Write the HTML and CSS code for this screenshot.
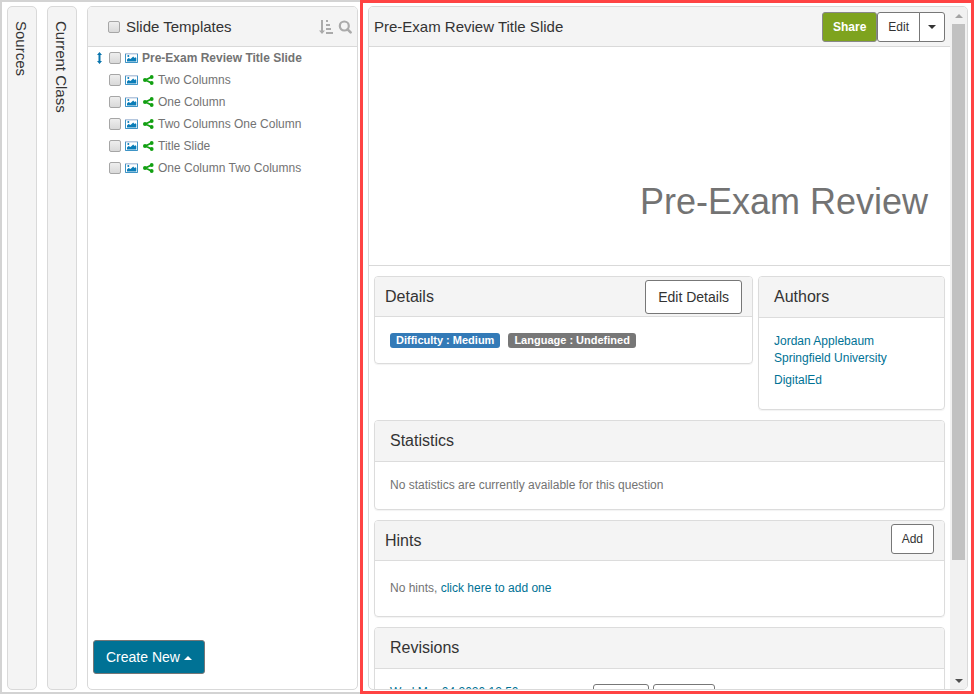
FILE: index.html
```
<!DOCTYPE html>
<html lang="en">
<head>
    <meta charset="UTF-8">
    <title>Slide Templates</title>
    <link rel="stylesheet" href="styles.css">
</head>
<body>

<!-- shared icons -->
<svg class="sprite" aria-hidden="true">
    <symbol id="image" viewBox="0 0 13 10">
        <path fill="#b5c7de" d="M0 0h13v10H0z"/>
        <path fill="#fff" d="M1 1.500h11V9H1z"/>
        <path fill="#0a7db8" d="M2 8.500V6.500l1.500-1.500L5.500 6l2.700-2.500L9.500 5l1-.8.8.8v3.500z"/>
        <circle fill="#0a7db8" cx="3.300" cy="3" r="1"/>
        <path fill="none" stroke="#3d94c6" d="M.5 1v8.500h12V1"/>
    </symbol>
    <symbol id="share" viewBox="0 0 12 10">
        <path fill="none" stroke="#12a012" stroke-width="1.800" d="M9.500 2L3.500 5l6 3"/>
        <circle fill="#12a012" cx="9.700" cy="2" r="1.900"/>
        <circle fill="#12a012" cx="3" cy="5" r="2"/>
        <circle fill="#12a012" cx="9.700" cy="8" r="1.900"/>
    </symbol>
</svg>

<div class="app">
    <aside class="browser">
        <button class="tab" type="button">Sources</button>
        <button class="tab" type="button">Current Class</button>

        <section class="panel list">
            <header class="panel-header">
                <input type="checkbox" id="all" class="check">
                <label for="all" class="title">Slide Templates</label>
                <button class="tool" type="button" aria-label="Sort">
                    <svg width="14" height="14" viewBox="0 0 14 14"><path fill="#aaa" d="M2 0h2v10.500h2L3 14l-3-3.500h2zM7 0h2v2H7zM7 4h4v2H7zM7 8h5v2H7zM7 12h7v2H7z"/></svg>
                </button>
                <button class="tool" type="button" aria-label="Search">
                    <svg width="14" height="14" viewBox="0 0 14 14"><g fill="none" stroke="#aaa"><circle cx="6.300" cy="6" r="4.500" stroke-width="2.200"/><path d="M9.600 9.300l3 3" stroke-width="2.600" stroke-linecap="round"/></g></svg>
                </button>
            </header>
            <ul class="slides">
                <li class="slide active">
                    <svg class="move" width="5" height="12" viewBox="0 0 5 12"><path fill="#0a75ad" d="M2.500 0L5 3H3.500v6H5l-2.500 3L0 9h1.500V3H0z"/></svg>
                    <input type="checkbox" id="s1" class="check">
                    <svg class="image"><use href="#image"/></svg>
                    <label for="s1">Pre-Exam Review Title Slide</label>
                </li>
                <li class="slide">
                    <input type="checkbox" id="s2" class="check">
                    <svg class="image"><use href="#image"/></svg>
                    <svg class="share"><use href="#share"/></svg>
                    <label for="s2">Two Columns</label>
                </li>
                <li class="slide">
                    <input type="checkbox" id="s3" class="check">
                    <svg class="image"><use href="#image"/></svg>
                    <svg class="share"><use href="#share"/></svg>
                    <label for="s3">One Column</label>
                </li>
                <li class="slide">
                    <input type="checkbox" id="s4" class="check">
                    <svg class="image"><use href="#image"/></svg>
                    <svg class="share"><use href="#share"/></svg>
                    <label for="s4">Two Columns One Column</label>
                </li>
                <li class="slide">
                    <input type="checkbox" id="s5" class="check">
                    <svg class="image"><use href="#image"/></svg>
                    <svg class="share"><use href="#share"/></svg>
                    <label for="s5">Title Slide</label>
                </li>
                <li class="slide">
                    <input type="checkbox" id="s6" class="check">
                    <svg class="image"><use href="#image"/></svg>
                    <svg class="share"><use href="#share"/></svg>
                    <label for="s6">One Column Two Columns</label>
                </li>
            </ul>
            <footer class="list-footer">
                <button class="btn btn-large btn-create" type="button">Create New <span class="caret up"></span></button>
            </footer>
        </section>
    </aside>

    <main class="detail">
        <section class="panel viewer">
            <div class="content">
                <header class="panel-header">
                    <h1 class="title">Pre-Exam Review Title Slide</h1>
                    <button class="btn btn-share" type="button">Share</button>
                    <div class="btn-group">
                        <button class="btn" type="button">Edit</button>
                        <button class="btn btn-caret" type="button" aria-label="More"><span class="caret"></span></button>
                    </div>
                </header>

                <div class="preview">Pre-Exam Review</div>

                <div class="cards">
                    <div class="columns">
                        <article class="card">
                            <header class="card-header with-button">
                                <h2>Details</h2>
                                <button class="btn btn-large" type="button">Edit Details</button>
                            </header>
                            <div class="card-body badges">
                                <span class="badge blue">Difficulty : Medium</span>
                                <span class="badge">Language : Undefined</span>
                            </div>
                        </article>
                        <article class="card">
                            <header class="card-header"><h2>Authors</h2></header>
                            <div class="card-body authors">
                                <p><a href="#">Jordan Applebaum</a><br><a href="#">Springfield University</a></p>
                                <p><a href="#">DigitalEd</a></p>
                            </div>
                        </article>
                    </div>

                    <article class="card">
                        <header class="card-header"><h2>Statistics</h2></header>
                        <div class="card-body">No statistics are currently available for this question</div>
                    </article>

                    <article class="card">
                        <header class="card-header with-button">
                            <h2>Hints</h2>
                            <button class="btn" type="button">Add</button>
                        </header>
                        <div class="card-body hints">No hints, <a href="#">click here to add one</a></div>
                    </article>

                    <article class="card">
                        <header class="card-header"><h2>Revisions</h2></header>
                        <div class="card-body revision">
                            <a href="#">Wed Mar 04 2020 12:50</a>
                            <button class="btn" type="button" aria-label="View"></button>
                            <button class="btn" type="button" aria-label="Revert"></button>
                        </div>
                    </article>
                </div>
            </div>

            <div class="scrollbar" aria-hidden="true">
                <div class="scroll-end"><span class="caret up"></span></div>
                <div class="scroll-track"><div class="scroll-thumb"></div></div>
                <div class="scroll-end"><span class="caret"></span></div>
            </div>
        </section>
    </main>
</div>

</body>
</html>
```
FILE: styles.css
```
* {
    box-sizing: border-box;
}

body {
    margin: 0;
    font-family: "Liberation Sans", Arial, sans-serif;
    font-size: 12px;
    line-height: 17px;
    color: #737373;
    background-color: white;
}

h1, h2, p, ul {
    margin: 0;
    padding: 0;
    font-weight: normal;
}

button {
    font-family: inherit;
    cursor: pointer;
}

a {
    color: #007295;
    text-decoration: none;
}

a:hover {
    text-decoration: underline;
}

.sprite {
    position: absolute;
    width: 0;
    height: 0;
}

.app {
    display: flex;
    height: 100vh;
}

/* left side */

.browser {
    display: flex;
    flex: none;
    gap: 10px;
    padding: 4px 2px 2px 5px;
    border: 2px solid #d3d3d3;
    border-right: 0;
}

.tab {
    width: 30px;
    padding: 14px 3px 14px 0;
    border: 1px solid #d9d9d9;
    border-radius: 5px;
    background-color: #f4f4f4;
    color: #333;
    font-size: 15px;
    line-height: 24px;
    text-align: left;
    writing-mode: vertical-rl;
}

.panel {
    border: 1px solid #d9d9d9;
    border-radius: 5px;
    overflow: hidden;
}

.panel-header {
    display: flex;
    align-items: center;
    height: 40px;
    padding: 0 5px;
    border-bottom: 1px solid #d9d9d9;
    background-color: #f4f4f4;
}

.title {
    flex: 1;
    font-size: 15px;
    color: #333;
}

.list {
    display: flex;
    flex-direction: column;
    width: 271px;
}

.list .panel-header {
    gap: 5px;
    padding-left: 20px;
}

.check {
    appearance: none;
    flex: none;
    width: 12px;
    height: 12px;
    margin: 0;
    border: 1px solid #a6a6a6;
    border-radius: 2px;
    background: linear-gradient(#eee, #d9d9d9);
}

.list .panel-header .check {
    margin-right: 1px;
}

.tool {
    width: 14px;
    height: 14px;
    padding: 0;
    border: 0;
    background: none;
}

.tool svg {
    display: block;
}

.slides {
    flex: 1;
    list-style: none;
}

.slide {
    display: flex;
    align-items: center;
    gap: 4px;
    height: 22px;
    padding-left: 21px;
}

.active {
    padding-left: 9px;
    font-weight: bold;
}

.move {
    margin-right: 3px;
}

.image {
    width: 13px;
    height: 10px;
}

.share {
    width: 12px;
    height: 10px;
}

.list-footer {
    padding: 15px 5px;
}

/* buttons */

.btn {
    height: 30px;
    padding: 0 10px;
    border: 1px solid #777;
    border-radius: 3px;
    background-color: white;
    color: #333;
    font-size: 12px;
    line-height: 18px;
}

.btn-large {
    height: 34px;
    padding: 0 12px;
    font-size: 14px;
}

.btn-create {
    background-color: #007295;
    color: white;
}

.btn-share {
    border-color: #888;
    background-color: #7ea31e;
    color: white;
    font-weight: bold;
}

.btn-group {
    display: flex;
}

.btn-group .btn:first-child {
    border-radius: 3px 0 0 3px;
}

.btn-group .btn-caret {
    width: 26px;
    padding: 0;
    margin-left: -1px;
    border-radius: 0 3px 3px 0;
}

.caret {
    display: inline-block;
    border: 4px solid transparent;
    border-top-color: currentColor;
    border-bottom: 0;
    vertical-align: middle;
}

.caret.up {
    border-top: 0;
    border-bottom: 4px solid currentColor;
}

/* right side */

.detail {
    flex: 1;
    min-width: 0;
    padding: 3px 3px 1px 5px;
    border: 3px solid #ff4343;
}

.viewer {
    display: flex;
    height: 100%;
}

.content {
    flex: 1;
    min-width: 0;
    overflow: hidden;
}

.preview {
    height: 219px;
    padding: 134px 22px 0;
    border-bottom: 1px solid #d9d9d9;
    font-size: 36px;
    line-height: 42px;
    text-align: right;
}

.cards {
    display: flex;
    flex-direction: column;
    gap: 10px;
    padding: 10px 5px;
}

.columns {
    display: grid;
    grid-template-columns: 1fr 187px;
    align-items: start;
    gap: 5px;
}

.card {
    border: 1px solid #dcdcdc;
    border-radius: 4px;
    box-shadow: 0 1px 1px rgba(0, 0, 0, 0.05);
    overflow: hidden;
}

.card-header {
    height: 41px;
    padding: 0 15px;
    border-bottom: 1px solid #dcdcdc;
    background-color: #f4f4f4;
}

.card-header h2 {
    font-size: 16px;
    line-height: 39px;
    color: #333;
}

.with-button {
    display: flex;
    align-items: flex-start;
    justify-content: space-between;
    height: 40px;
    padding: 0 10px;
}

.with-button .btn {
    margin-top: 3px;
}

.card-body {
    padding: 15px;
}

.badges {
    display: flex;
    gap: 8px;
    padding-top: 16px;
}

.badge {
    padding: 0 6px;
    border-radius: 3px;
    background-color: #777;
    color: white;
    font-size: 11px;
    font-weight: bold;
    line-height: 15px;
}

.blue {
    background-color: #337ab7;
}

.authors p {
    margin-bottom: 5px;
}

.hints {
    padding: 19px 15px;
}

.revision {
    display: grid;
    grid-template-columns: 199px 56px 62px;
    column-gap: 4px;
    align-items: start;
}

/* scrollbar */

.scrollbar {
    display: flex;
    flex-direction: column;
    width: 17px;
    background-color: #f1f1f1;
}

.scroll-end {
    display: flex;
    align-items: center;
    justify-content: center;
    height: 17px;
    color: #505050;
}

.scroll-end:first-child {
    color: #a3a3a3;
}

.scroll-track {
    flex: 1;
    padding: 0 2px;
}

.scroll-thumb {
    height: 82.7%;
    background-color: #c1c1c1;
}
```
